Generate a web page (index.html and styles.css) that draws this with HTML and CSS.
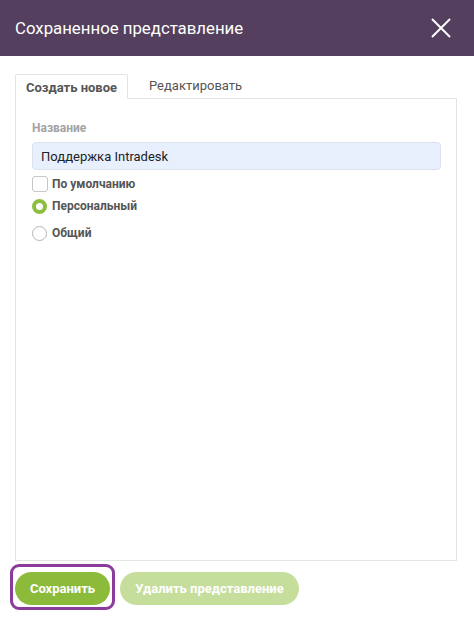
FILE: index.html
```html
<!DOCTYPE html>
<html lang="ru">
<head>
<meta charset="utf-8">
<link rel="stylesheet" href="styles.css">
</head>
<body>
<div class="dialog">
  <header class="head">
    <h1 class="title">Сохраненное представление</h1>
    <svg class="close" width="20" height="20" viewBox="0 0 20 20"><path d="M1 1L19 19M19 1L1 19" stroke="#fff" stroke-width="2"/></svg>
  </header>
  <div class="body">
    <div class="tabs">
      <div class="tab active">Создать новое</div>
      <div class="tab">Редактировать</div>
    </div>
    <div class="panel">
      <div class="label">Название</div>
      <div class="input">Поддержка Intradesk</div>
      <div class="opt first"><span class="check"></span>По умолчанию</div>
      <div class="opt"><span class="radio on"></span>Персональный</div>
      <div class="opt"><span class="radio"></span>Общий</div>
    </div>
    <div class="actions">
      <div class="focus"><button class="btn save">Сохранить</button></div>
      <button class="btn del">Удалить представление</button>
    </div>
  </div>
</div>
</body>
</html>
```
FILE: styles.css
```css
* { box-sizing: border-box; }
html, body { margin: 0; padding: 0; background: #fff; }
body { font-family: Roboto, "Liberation Sans", sans-serif; width: 474px; height: 617px; overflow: hidden; }
.head { height: 56px; background: #543f5e; display: flex; align-items: center; justify-content: space-between; padding: 0 23px 0 15px; }
.title { margin: 0; color: #fff; font-size: 16.8px; font-weight: 400; }
.close { display: block; }
.body { padding: 17px 17px 0 15px; }
.tabs { display: flex; height: 25px; }
.tab { font-size: 13px; color: #555; display: flex; align-items: center; }
.tab.active { width: 113px; justify-content: center; border: 1px solid #e4e4e4; border-bottom: none; background: #fff; font-weight: 700; position: relative; top: 1px; border-radius: 2px 2px 0 0; }
.tab:not(.active) { padding-left: 21px; }
.panel { border: 1px solid #e4e4e4; height: 463px; padding: 22px 16px 0 16px; }
.label { font-size: 12px; font-weight: 700; color: #a3a3a3; line-height: 14px; }
.input { margin-top: 7px; height: 28px; width: 409px; background: #e8f0fe; border: 1px solid #dbe2ec; border-radius: 4px; font-size: 13px; color: #222; padding: 0 8px; display: flex; align-items: center; }
.opt { display: flex; align-items: center; font-size: 12px; font-weight: 700; color: #555; height: 16px; }
.opt.first { margin-top: 6px; }
.opt + .opt { margin-top: 6px; }
.opt:last-child { margin-top: 11px; }
.check { width: 16px; height: 16px; border: 1px solid #c8c8c8; border-radius: 3px; margin-right: 4px; }
.radio { width: 15px; height: 15px; border: 1px solid #b5b5b5; border-radius: 50%; margin-right: 5px; }
.radio.on { border: 4px solid #8cbe3f; }
.actions { display: flex; align-items: center; margin-top: 3px; margin-left: -5px; gap: 5px; }
.focus { border: 3px solid #8b3c9a; border-radius: 9px; padding: 5px 2px 2px 2px; }
.btn { border: none; font-family: inherit; font-size: 13px; font-weight: 700; color: #fff; height: 33px; border-radius: 17px; padding: 0; }
.save { width: 95px; background: #8cbb3c; display: block; }
.del { width: 179px; background: #c5de9c; margin-top: 3px; }
```
